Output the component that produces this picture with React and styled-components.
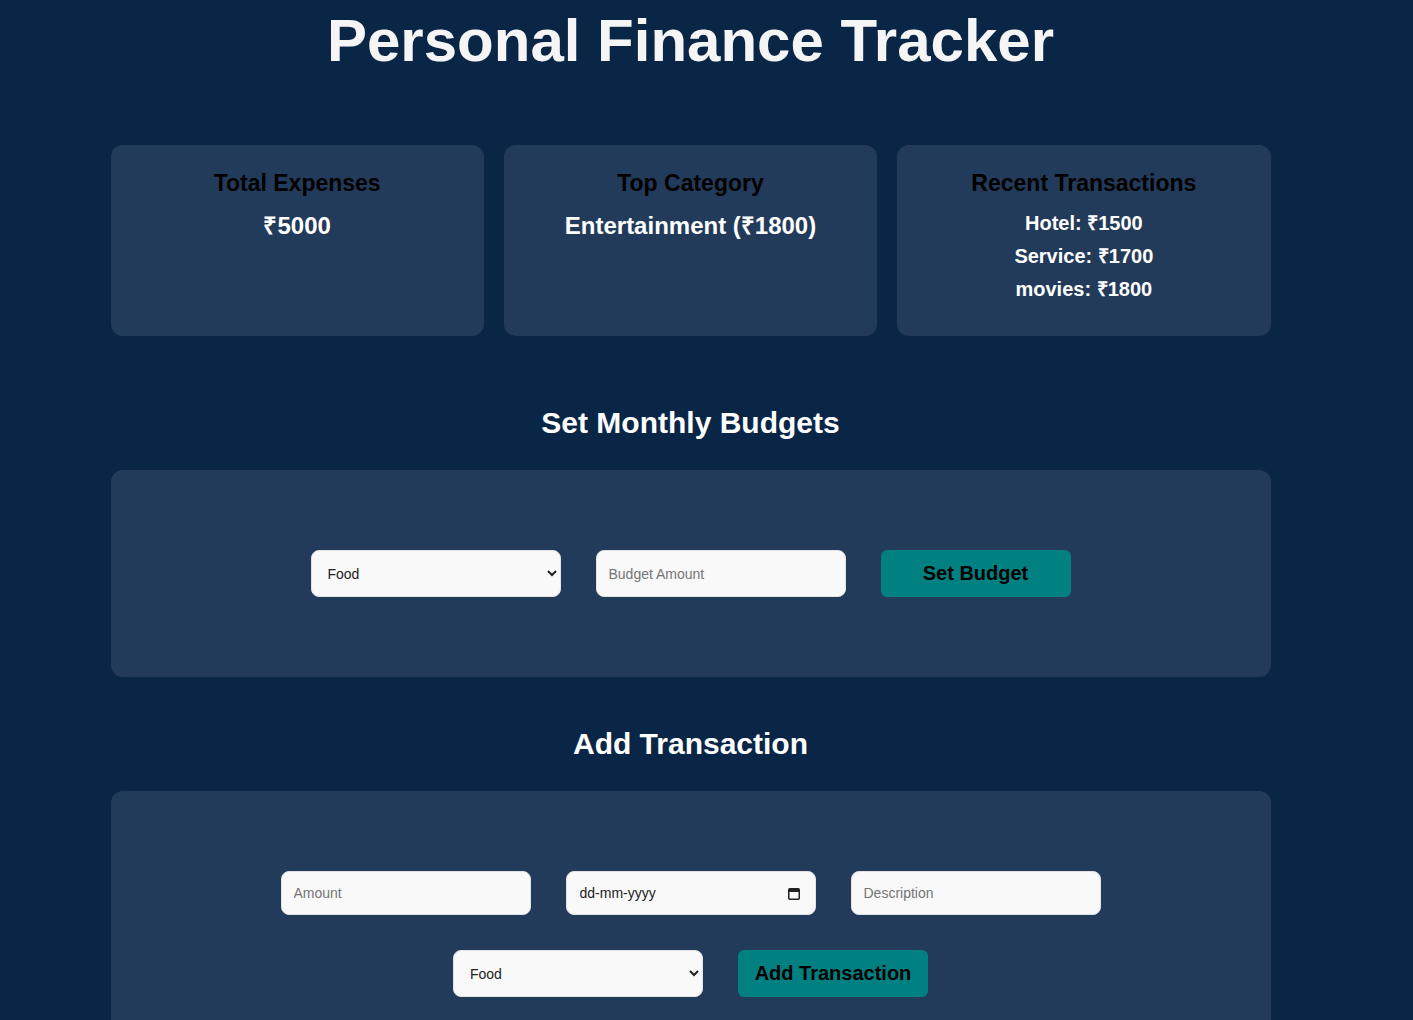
import React, { useState } from 'react';
import styled, { createGlobalStyle } from 'styled-components';

const GlobalStyle = createGlobalStyle`
  html, body {
    margin: 0;
    padding: 0;
    background-color: #0a2647;
  }
  body {
    font-family: "Liberation Sans", Arial, sans-serif;
  }
  * {
    box-sizing: border-box;
  }
`;

const Page = styled.div`
  width: 1381px;
  padding-bottom: 40px;
`;

const Container = styled.div`
  max-width: 1160px;
  margin: 0 auto;
`;

const Title = styled.h1`
  margin: 7px 0 0;
  font-size: 60px;
  line-height: 68px;
  font-weight: 700;
  text-align: center;
  color: #f5f5f5;
`;

const Summary = styled.div`
  display: grid;
  grid-template-columns: repeat(3, 1fr);
  gap: 20px;
  margin: 70px 0 69px;
`;

const Card = styled.div`
  min-height: 191px;
  padding: 25px 20px;
  border-radius: 12px;
  background-color: #233b5a;
  text-align: center;
`;

const CardTitle = styled.h3`
  margin: 0 0 16px;
  font-size: 23px;
  line-height: 26px;
  font-weight: 700;
  color: #000;
`;

const Value = styled.p`
  margin: 0;
  font-size: 24px;
  line-height: 28px;
  font-weight: 700;
  color: #fff;
`;

const List = styled.div`
  display: flex;
  flex-direction: column;
  gap: 10px;
`;

const ListItem = styled.p`
  margin: 0;
  font-size: 20px;
  line-height: 23px;
  font-weight: 700;
  color: #fff;
`;

const SectionTitle = styled.h2`
  margin: 49px 0 30px;
  font-size: 30px;
  line-height: 35px;
  font-weight: 700;
  text-align: center;
  color: #fff;
`;

const Panel = styled.div`
  padding: 80px;
  border-radius: 12px;
  background-color: #233b5a;
`;

const Form = styled.form`
  display: flex;
  flex-wrap: wrap;
  justify-content: center;
  gap: 35px;
`;

const Input = styled.input`
  width: 250px;
  padding: 12px;
  font-family: "Liberation Sans", Arial, sans-serif;
  font-size: 14px;
  line-height: 18px;
  color: #222;
  background-color: #f9f9f9;
  border: 1px solid #e2e2e2;
  border-radius: 8px;
  outline: none;

  &::placeholder {
    color: #757575;
  }
`;

const Select = styled.select`
  width: 250px;
  padding: 0 8px 0 12px;
  font-family: "Liberation Sans", Arial, sans-serif;
  font-size: 14px;
  color: #222;
  background-color: #f9f9f9;
  border: 1px solid #e2e2e2;
  border-radius: 8px;
  outline: none;
`;

const DateField = styled.label`
  display: flex;
  align-items: center;
  width: 250px;
  padding: 0 15px 0 13px;
  background-color: #f9f9f9;
  border: 1px solid #e2e2e2;
  border-radius: 8px;
  cursor: text;
`;

const DateInput = styled.input`
  flex: 1;
  min-width: 0;
  padding: 12px 0;
  font-family: "Liberation Sans", Arial, sans-serif;
  font-size: 14px;
  line-height: 18px;
  color: #222;
  background: transparent;
  border: none;
  outline: none;

  &::placeholder {
    color: #222;
  }
`;

const Button = styled.button`
  width: 190px;
  padding: 12px 0;
  font-family: "Liberation Sans", Arial, sans-serif;
  font-size: 20px;
  line-height: 23px;
  font-weight: 700;
  color: #000;
  background-color: #008080;
  border: none;
  border-radius: 6px;
  cursor: pointer;

  &:hover {
    background-color: #007070;
  }
`;

const CalendarIcon = () => (
  <svg width="12" height="13" viewBox="0 0 12 13" aria-hidden="true">
    <rect x="0.75" y="1.75" width="10.5" height="10.5" rx="1" fill="none" stroke="#222" strokeWidth="1.5" />
    <rect x="1" y="2" width="10" height="3" fill="#222" />
  </svg>
);

const categories = ['Food', 'Entertainment', 'Hotel', 'Service', 'Travel'];

const recent = [
  { name: 'Hotel', amount: 1500 },
  { name: 'Service', amount: 1700 },
  { name: 'movies', amount: 1800 },
];

function App() {
  const [budgetCategory, setBudgetCategory] = useState('Food');
  const [budget, setBudget] = useState('');
  const [amount, setAmount] = useState('');
  const [date, setDate] = useState('');
  const [description, setDescription] = useState('');
  const [category, setCategory] = useState('Food');

  return (
    <Page>
      <GlobalStyle />
      <Container>
        <Title>Personal Finance Tracker</Title>

        <Summary>
          <Card>
            <CardTitle>Total Expenses</CardTitle>
            <Value>₹5000</Value>
          </Card>
          <Card>
            <CardTitle>Top Category</CardTitle>
            <Value>Entertainment (₹1800)</Value>
          </Card>
          <Card>
            <CardTitle>Recent Transactions</CardTitle>
            <List>
              {recent.map((t) => (
                <ListItem key={t.name}>
                  {t.name}: ₹{t.amount}
                </ListItem>
              ))}
            </List>
          </Card>
        </Summary>

        <SectionTitle>Set Monthly Budgets</SectionTitle>
        <Panel>
          <Form onSubmit={(e) => e.preventDefault()}>
            <Select value={budgetCategory} onChange={(e) => setBudgetCategory(e.target.value)}>
              {categories.map((c) => (
                <option key={c}>{c}</option>
              ))}
            </Select>
            <Input
              type="number"
              placeholder="Budget Amount"
              value={budget}
              onChange={(e) => setBudget(e.target.value)}
            />
            <Button type="submit">Set Budget</Button>
          </Form>
        </Panel>

        <SectionTitle>Add Transaction</SectionTitle>
        <Panel>
          <Form onSubmit={(e) => e.preventDefault()}>
            <Input
              type="number"
              placeholder="Amount"
              value={amount}
              onChange={(e) => setAmount(e.target.value)}
            />
            <DateField>
              <DateInput
                type="text"
                placeholder="dd-mm-yyyy"
                value={date}
                onChange={(e) => setDate(e.target.value)}
              />
              <CalendarIcon />
            </DateField>
            <Input
              type="text"
              placeholder="Description"
              value={description}
              onChange={(e) => setDescription(e.target.value)}
            />
            <Select value={category} onChange={(e) => setCategory(e.target.value)}>
              {categories.map((c) => (
                <option key={c}>{c}</option>
              ))}
            </Select>
            <Button type="submit">Add Transaction</Button>
          </Form>
        </Panel>
      </Container>
    </Page>
  );
}

export default App;
